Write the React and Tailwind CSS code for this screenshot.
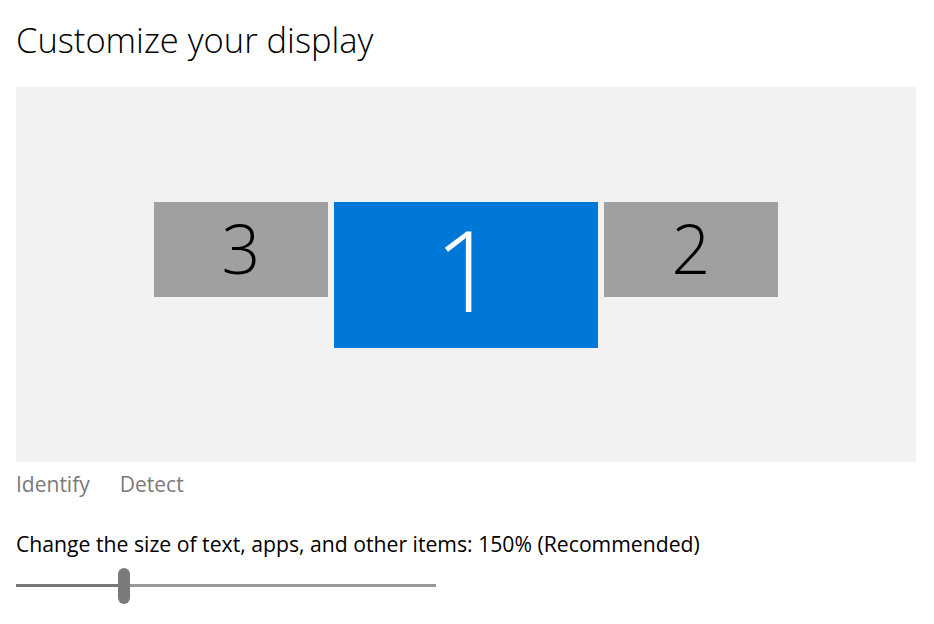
import React from 'react';

const font = { fontFamily: '"Segoe UI", "Open Sans", "Noto Sans", sans-serif' };

const Monitor = ({ label, active }) => (
  <div
    className={
      active
        ? 'w-[264px] h-[146px] bg-[#0078d7] text-white flex items-center justify-center'
        : 'w-[174px] h-[95px] bg-[#a0a0a0] text-black flex items-center justify-center'
    }
  >
    <span className={active ? 'text-[112px] font-extralight leading-none pb-[12px]' : 'text-[68px] font-extralight leading-none pb-[2px]'}>
      {label}
    </span>
  </div>
);

export default function App() {
  return (
    <div className="w-[934px] h-[624px] bg-white px-4 pt-[18px]" style={font}>
      <h1 className="text-[34.5px] font-light leading-[44px] text-black">Customize your display</h1>

      <div className="mt-[25px] h-[375px] w-[900px] bg-[#f2f2f2] flex items-center justify-center">
        <div className="flex items-start gap-[6px]">
          <Monitor label="3" />
          <Monitor label="1" active />
          <Monitor label="2" />
        </div>
      </div>

      <div className="mt-[8px] flex gap-[30px] text-[21px] leading-[28px] text-[#7a7a7a]">
        <span>Identify</span>
        <span>Detect</span>
      </div>

      <p className="mt-[32px] text-[21.2px] leading-[28px] text-black">
        Change the size of text, apps, and other items: 150% (Recommended)
      </p>

      <div className="relative mt-[10px] h-[36px] w-[420px]">
        <div className="absolute left-0 top-[16px] h-[3px] w-[104px] bg-[#777777]" />
        <div className="absolute left-[104px] right-0 top-[16px] h-[3px] bg-[#999999]" />
        <div className="absolute left-[102px] top-0 h-[36px] w-[12px] rounded-full bg-[#7a7a7a]" />
      </div>
    </div>
  );
}
